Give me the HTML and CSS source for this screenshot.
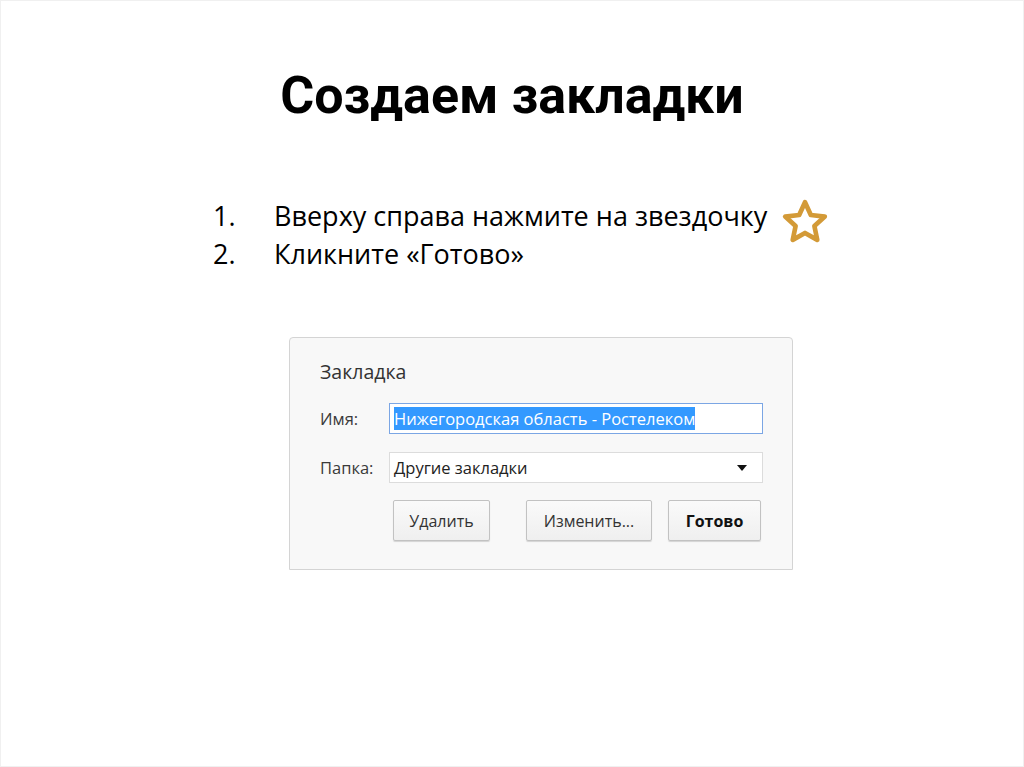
FILE: index.html
```html
<!DOCTYPE html>
<html lang="ru">
<head>
    <meta charset="UTF-8">
    <meta name="viewport" content="width=device-width, initial-scale=1.0">
    <title>Создаем закладки</title>
    <link rel="stylesheet" href="styles.css">
</head>
<body>
    <div class="slide">
        <h1 class="title">Создаем закладки</h1>

        <div class="steps">
            <div class="step">
                <span class="step-num">1.</span>
                <span class="step-text">Вверху справа нажмите на звездочку</span>
                <svg class="star" viewBox="0 0 48 48" width="50" height="50">
                    <path d="M24 5 L29.58 17.31 L43.02 18.82 L33.04 27.94 L35.76 41.18 L24 34.5 L12.24 41.18 L14.96 27.94 L4.98 18.82 L18.42 17.31 Z"
                          fill="none" stroke="#d39a37" stroke-width="4.5" stroke-linejoin="round"/>
                </svg>
            </div>
            <div class="step">
                <span class="step-num">2.</span>
                <span class="step-text">Кликните «Готово»</span>
            </div>
        </div>

        <div class="dialog">
            <div class="dialog-title">Закладка</div>
            <div class="form-row">
                <label class="form-label">Имя:</label>
                <div class="field field-active">
                    <span class="selected">Нижегородская область - Ростелеком</span>
                </div>
            </div>
            <div class="form-row">
                <label class="form-label">Папка:</label>
                <div class="field field-select">
                    <span>Другие закладки</span>
                    <span class="arrow"></span>
                </div>
            </div>
            <div class="buttons">
                <button class="btn btn-delete">Удалить</button>
                <button class="btn btn-edit">Изменить...</button>
                <button class="btn btn-done">Готово</button>
            </div>
        </div>
    </div>
</body>
</html>
```

FILE: styles.css
```css
* {
    box-sizing: border-box;
}
body {
    margin: 0;
    background: #fff;
    font-family: "Open Sans", "Liberation Sans", sans-serif;
}
.slide {
    width: 1024px;
    height: 767px;
    border: 1px solid #f0f0f0;
    padding-top: 58px;
    overflow: hidden;
}
.title {
    margin: 0;
    text-align: center;
    font-family: Roboto, "Open Sans", sans-serif;
    font-size: 52px;
    font-weight: 700;
    line-height: 74px;
    color: #000;
}
.steps {
    margin: 63px 0 0 212px;
}
.step {
    display: flex;
    align-items: center;
    height: 38px;
    font-size: 27px;
    color: #000;
}
.step-num {
    width: 61px;
}
.star {
    margin-left: 13px;
    margin-top: 9px;
    margin-bottom: -4px;
}
.dialog {
    width: 504px;
    height: 233px;
    margin: 65px 0 0 288px;
    padding: 19px 0 0 30px;
    background: #f8f8f8;
    border: 1px solid #d4d4d4;
    border-radius: 4px 4px 0 0;
    font-size: 16.5px;
    color: #222;
}
.dialog-title {
    font-size: 19.5px;
    color: #333;
    height: 30px;
    line-height: 30px;
    margin-bottom: 16px;
}
.form-row {
    display: flex;
    align-items: center;
    margin-bottom: 18px;
}
.form-label {
    width: 69px;
    color: #3a3a3a;
}
.field {
    width: 374px;
    height: 31px;
    background: #fff;
    display: flex;
    align-items: center;
    padding: 0 4px;
}
.field-active {
    border: 1px solid #7ba6e4;
}
.selected {
    background: #3399ff;
    color: #fff;
    line-height: 23px;
}
.field-select {
    border: 1px solid #dcdcdc;
    justify-content: space-between;
    color: #222;
}
.arrow {
    width: 0;
    height: 0;
    border-left: 5px solid transparent;
    border-right: 5px solid transparent;
    border-top: 6px solid #111;
    margin-right: 11px;
}
.buttons {
    display: flex;
    margin-left: 73px;
    margin-top: -1px;
}
.btn {
    height: 41px;
    background: linear-gradient(#fafafa, #efefef);
    border: 1px solid #c2c2c2;
    border-radius: 2px;
    box-shadow: 0 1px 1px rgba(0, 0, 0, 0.15);
    font-family: "Open Sans", "Liberation Sans", sans-serif;
    font-size: 16px;
    color: #333;
    padding: 0;
}
.btn-delete {
    width: 97px;
}
.btn-edit {
    width: 126px;
    margin-left: 36px;
}
.btn-done {
    width: 93px;
    margin-left: 16px;
    font-weight: 700;
    color: #111;
}
```
